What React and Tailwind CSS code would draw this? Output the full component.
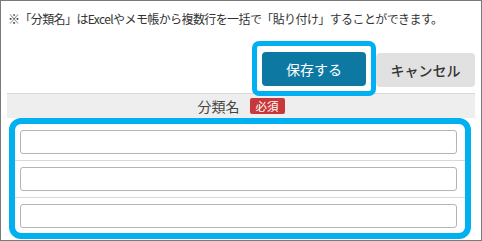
import React from "react";

const font = { fontFamily: '"Noto Sans CJK JP", "Noto Sans", sans-serif' };

function Row({ last }) {
  return (
    <div
      className={`pl-[5px] pr-[8px] ${last ? "pt-[6px] pb-[5px]" : "pt-[6px] pb-[6px] border-b border-[#d8d8d8]"}`}
    >
      <input
        type="text"
        className="block w-full h-[24px] bg-white border border-[#b4b4b4] rounded-[3px] outline-none"
      />
    </div>
  );
}

export default function App() {
  return (
    <div
      className="w-[482px] h-[241px] bg-white border border-[#7a7a7a] overflow-hidden text-[#333]"
      style={font}
    >
      {/* notice */}
      <p className="pl-[7px] pt-[9px] text-[12px] leading-[18px] tracking-[-0.6px] whitespace-nowrap">
        ※「分類名」はExcelやメモ帳から複数行を一括で「貼り付け」することができます。
      </p>

      {/* buttons */}
      <div className="relative z-10 mt-[13px] flex justify-end pr-[6px]">
        <div className="border-[5px] border-[#00b0f0] rounded-[7px] px-[5px] pt-[6px] pb-[5px]">
          <button className="w-[104px] h-[34px] rounded-[4px] bg-[#0d79a3] text-white text-[14px]">
            保存する
          </button>
        </div>
        <button className="mt-[12px] w-[99px] h-[34px] rounded-[4px] bg-[#e1e1e1] text-[#333] text-[14px] font-medium">
          キャンセル
        </button>
      </div>

      {/* table */}
      <div className="mx-[6px] -mt-[3px]">
        <div className="h-[25px] bg-[#eeeeee] border-t border-[#d8d8d8] flex items-center justify-center gap-[10px]">
          <span className="text-[14px] text-[#444]">分類名</span>
          <span className="h-[16px] px-[6px] rounded-[2px] bg-[#c8383a] text-white text-[11.5px] leading-[16px]">
            必須
          </span>
        </div>
        <div className="ml-[2px] mr-[4px] border-[6px] border-[#00b0f0] rounded-[12px] bg-white">
          <Row />
          <Row />
          <Row last />
        </div>
      </div>
    </div>
  );
}
